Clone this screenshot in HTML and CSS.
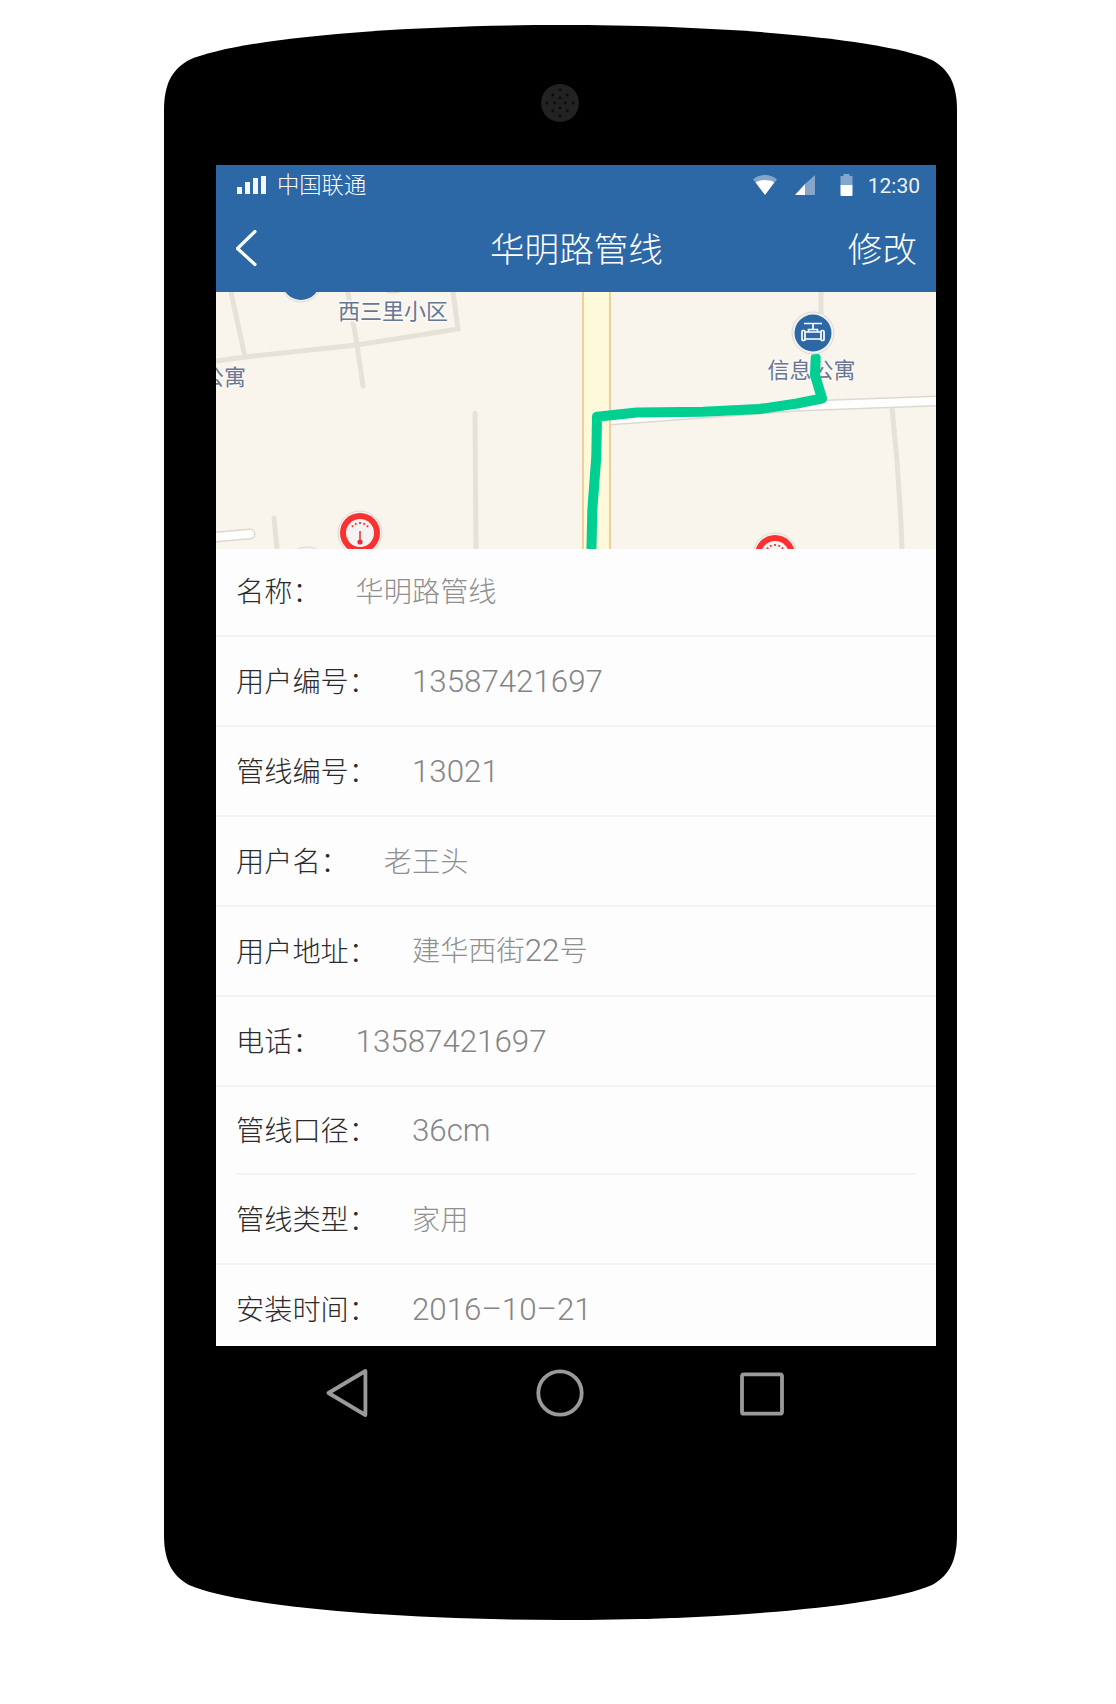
FILE: index.html
```
<!DOCTYPE html>
<html lang="zh-CN">
<head>
<meta charset="utf-8">
<title>华明路管线</title>
<link rel="stylesheet" href="styles.css">
</head>
<body>
<div class="phone">
  <svg class="speaker" viewBox="-20 -20 40 40" aria-hidden="true">
    <circle class="speaker-body" r="19"/>
    <g class="speaker-holes">
      <circle cx="0" cy="-13" r="1.4"/><circle cx="-7.3" cy="-8" r="1.4"/><circle cx="7.3" cy="-8" r="1.4"/>
      <circle cx="-13" cy="0" r="1.4"/><circle cx="-5.3" cy="0" r="1.4"/><circle cx="5.3" cy="0" r="1.4"/><circle cx="13" cy="0" r="1.4"/>
      <circle cx="-7.3" cy="8" r="1.4"/><circle cx="7.3" cy="8" r="1.4"/><circle cx="0" cy="13" r="1.4"/>
      <circle cx="0" cy="-5" r="1.4"/><circle cx="0" cy="5" r="1.4"/>
    </g>
  </svg>

  <main class="screen">
    <div class="status">
      <div class="status-left">
        <div class="signal"><i class="bar bar-1"></i><i class="bar bar-2"></i><i class="bar bar-3"></i><i class="bar bar-4"></i></div>
        <span class="carrier">中国联通</span>
      </div>
      <div class="status-right">
        <svg class="wifi" viewBox="0 0 24 20" aria-hidden="true">
          <path class="dim" d="M0 4.5C3 1.5 7.5 0 12 0s9 1.5 12 4.500L21 8C18.500 6.300 15.500 5.500 12 5.500S5.500 6.300 3 8z"/>
          <path d="M2.600 7.500C5 5.700 8.300 5 12 5s7 .7 9.400 2.500L12 20z"/>
        </svg>
        <svg class="cell" viewBox="0 0 20 20" aria-hidden="true">
          <path class="dim" d="M20 0V20H10V9z"/>
          <path d="M10 9V20H0z"/>
        </svg>
        <svg class="battery" viewBox="0 0 14 22" aria-hidden="true">
          <path class="dim" d="M4 0H10V2H13V11H1V2H4z"/>
          <path d="M1 11H13V21a1 1 0 0 1-1 1H2a1 1 0 0 1-1-1z"/>
        </svg>
        <span class="time">12:30</span>
      </div>
    </div>

    <header class="topbar">
      <div class="topbar-side">
        <svg class="chevron" viewBox="0 0 22 38" aria-hidden="true"><path d="M19 2.500L1.500 19.500L19 35.500"/></svg>
      </div>
      <h1 class="title">华明路管线</h1>
      <div class="topbar-side topbar-action">修改</div>
    </header>

    <div class="map">
      <svg class="map-canvas" viewBox="216 292 720 257" aria-hidden="true">
        <defs>
          <g id="gauge">
            <circle class="pin-ring" r="22"/>
            <circle class="gauge-red" r="20"/>
            <circle class="gauge-face" r="14"/>
            <path class="gauge-ticks" d="M-8-7.500l1 1.600M-4.500-10l.6 1.800M0-11v2M4.500-10l-.6 1.800M8-7.500l-1 1.600"/>
            <path class="gauge-needle" d="M0-2V8"/>
            <circle class="gauge-bulb" cx="0" cy="9" r="2.600"/>
          </g>
        </defs>
        <g class="roads">
          <path d="M231 292L245 357"/>
          <path d="M216 361L245 357L357 345L458 329L453 292"/>
          <path d="M348 292L357 345L363 386"/>
          <path d="M475 413L476 549"/>
          <path d="M274 518L277 549"/>
          <path d="M821 292V320"/>
          <path d="M892 408C896 445 900 490 902 549"/>
        </g>
        <path class="wide-edge" d="M216 537L250 534"/>
        <path class="wide-fill" d="M216 537L250 534"/>
        <path class="wide-edge" d="M610 420L800 406L936 401"/>
        <path class="wide-fill" d="M610 420L800 406L936 401"/>
        <rect class="avenue-edge" x="582" y="292" width="29" height="257"/>
        <rect class="avenue-fill" x="584" y="292" width="25" height="257"/>
        <circle class="pin-ring-faint" cx="393" cy="273" r="20"/>
        <circle class="pin-ring" cx="307" cy="569" r="22"/>

        <text class="map-label" x="338" y="318.500">西三里小区</text>
        <text class="map-label" x="202" y="384.500">公寓</text>
        <text class="map-label" x="767.500" y="377.500">信息公寓</text>

        <path class="route" d="M815.700 358L815 375L822 398.500L797 403.500L760 409L703 411.700L636.700 412.500L597 416.700L596.300 456.700L592.300 510L591.300 556"/>

        <circle class="pin-ring" cx="301" cy="281" r="21"/>
        <circle class="pin-blue" cx="301" cy="281" r="19"/>

        <g transform="translate(813 333)">
          <circle class="pin-ring" r="21"/>
          <circle class="pin-blue" r="18.500"/>
          <path class="valve" d="M-9-9.500H9M0-9.500V-3.500M-4.500-1V-3.500H4.500V-1M-8-1H8M-8 6H8M-11-1.500a1 1 0 0 1 1-1h1a1 1 0 0 1 1 1v8a1 1 0 0 1-1 1h-1a1 1 0 0 1-1-1zM8-1.500a1 1 0 0 1 1-1h1a1 1 0 0 1 1 1v8a1 1 0 0 1-1 1H9a1 1 0 0 1-1-1z"/>
        </g>
        <use href="#gauge" x="360" y="533"/>
        <use href="#gauge" x="775" y="555"/>
      </svg>
    </div>

    <section class="details">
      <div class="row row-first"><span class="label">名称：</span><span class="value">华明路管线</span></div>
      <div class="row"><span class="label">用户编号：</span><span class="value num">13587421697</span></div>
      <div class="row"><span class="label">管线编号：</span><span class="value num">13021</span></div>
      <div class="row"><span class="label">用户名：</span><span class="value">老王头</span></div>
      <div class="row"><span class="label">用户地址：</span><span class="value">建华西街<span class="num">22</span>号</span></div>
      <div class="row"><span class="label">电话：</span><span class="value num">13587421697</span></div>
      <div class="row row-inset"><span class="label">管线口径：</span><span class="value num">36cm</span></div>
      <div class="row"><span class="label">管线类型：</span><span class="value">家用</span></div>
      <div class="row row-last"><span class="label">安装时间：</span><span class="value num">2016–10–21</span></div>
    </section>
  </main>

  <nav class="softkeys" aria-label="系统导航">
    <svg class="key key-back" viewBox="0 0 48 48" aria-hidden="true"><path d="M42.400 2V46L5.500 24z"/></svg>
    <svg class="key key-home" viewBox="0 0 48 48" aria-hidden="true"><circle cx="24" cy="24" r="21.700"/></svg>
    <svg class="key key-recents" viewBox="0 0 48 48" aria-hidden="true"><rect x="4" y="5.300" width="40" height="39.400" rx="2"/></svg>
  </nav>
</div>
</body>
</html>
```

FILE: styles.css
```
* { box-sizing: border-box; }
html, body { margin: 0; padding: 0; background: #fff; }
body {
  height: 1704px;
  overflow: hidden;
  font-family: "Noto Sans CJK SC", "Liberation Sans", sans-serif;
}

.phone {
  width: 793px;
  height: 1595px;
  margin: 25px 0 0 164px;
  padding: 58px 21px 0 52px;
  background: #000;
  clip-path: path("M0 85C0 55 11 43 25 35C76 13 236 0 396.500 0C557 0 717 13 768 35C782 43 793 55 793 85V1510C793 1540 782 1552 768 1560C717 1582 557 1595 396.500 1595C236 1595 76 1582 25 1560C11 1552 0 1540 0 1510Z");
}

.speaker { display: block; width: 40px; height: 40px; margin: 0 0 42px 324px; }
.speaker-body { fill: #222; }
.speaker-holes { fill: #0c0c0c; }

.screen { display: flex; flex-direction: column; width: 720px; height: 1181px; overflow: hidden; background: #fdfdfe; }

.status {
  display: flex;
  align-items: center;
  justify-content: space-between;
  flex: none;
  height: 40px;
  padding: 0 16px 0 21px;
  color: #fff;
  background: #2c67a6;
}
.status-left, .status-right { display: flex; align-items: center; }
.signal { display: flex; align-items: flex-end; gap: 3px; height: 18px; }
.bar { display: block; width: 5px; background: #f4f6f9; }
.bar-1 { height: 7px; }
.bar-2 { height: 12px; }
.bar-3 { height: 16px; }
.bar-4 { height: 18px; }
.carrier { margin-left: 11px; padding-bottom: 4px; font-size: 22.300px; line-height: 30px; font-weight: 300; }
.status-right svg { display: block; fill: #fff; }
.status-right .dim { fill: rgba(255, 255, 255, .42); }
.wifi { width: 24px; height: 20px; }
.cell { width: 20px; height: 20px; margin-left: 18px; }
.battery { width: 15px; height: 22px; margin-left: 24px; }
.time { margin-left: 14px; padding-top: 1px; font: 400 21px/28px Roboto, sans-serif; color: #eef2f7; }

.topbar {
  display: flex;
  align-items: center;
  justify-content: space-between;
  flex: none;
  height: 87px;
  padding: 0 19px 3px 20px;
  color: #fff;
  background: #2c67a6;
}
.topbar-side { width: 70px; font-size: 34.600px; line-height: 44px; font-weight: 300; }
.topbar-action { text-align: right; }
.chevron { display: block; width: 22px; height: 38px; margin-top: 2px; fill: none; stroke: #fff; stroke-width: 3.200; stroke-linecap: round; stroke-linejoin: round; }
.title { margin: 0; font-size: 34.600px; line-height: 44px; font-weight: 300; }

.map { flex: none; height: 257px; background: #f9f5ec; }
.map-canvas { display: block; width: 720px; height: 257px; }
.roads path { fill: none; stroke: #e6e2d7; stroke-width: 5; stroke-linecap: round; }
.wide-edge { fill: none; stroke: #ded9cd; stroke-width: 11; stroke-linecap: round; }
.wide-fill { fill: none; stroke: #fff; stroke-width: 8; stroke-linecap: round; }
.avenue-edge { fill: #edd09c; }
.avenue-fill { fill: #fff9dc; }
.map-label {
  font-size: 22px;
  fill: #6a7793;
  stroke: #fbf9f5;
  stroke-width: 3px;
  paint-order: stroke;
}
.route { fill: none; stroke: #00cf92; stroke-width: 10; stroke-linecap: round; stroke-linejoin: round; }
.pin-ring { fill: #f4f2ee; stroke: #dcd9d3; stroke-width: 1; }
.pin-ring-faint { fill: #f9f6ef; stroke: #d8d5cf; stroke-width: 1; }
.pin-blue { fill: #2c67a6; }
.valve { fill: none; stroke: #fff; stroke-width: 1.700; }
.gauge-red { fill: #fb3030; }
.gauge-face { fill: #f5f3f1; }
.gauge-ticks { fill: none; stroke: #fb3030; stroke-width: 1.800; }
.gauge-needle { fill: none; stroke: #e93030; stroke-width: 1.500; }
.gauge-bulb { fill: #e93030; }

.details { flex: 1; min-height: 0; }
.row {
  display: flex;
  align-items: center;
  height: 90px;
  padding: 0 20px 2px;
  border-bottom: 2px solid #f4f4f4;
}
.row-first { height: 88px; padding-bottom: 4px; }
.row-inset { height: 88px; margin: 0 20px; padding: 0 0 2px; }
.row-last { border-bottom: 0; height: 88px; }
.label { font-size: 28.200px; line-height: 40px; font-weight: 300; color: #2b2b2b; }
.value { margin-left: 35px; font-size: 28.200px; line-height: 40px; font-weight: 300; color: #8f8f8f; }
.value.num { padding-top: 4px; }
.num { font-family: Roboto, "Liberation Sans", sans-serif; font-size: 31.300px; font-weight: 300; color: #858585; }

.softkeys { display: flex; margin-top: 23px; }
.key { display: block; flex: none; width: 48px; height: 48px; fill: none; stroke: #9a9a9a; stroke-width: 3.800; stroke-linejoin: round; }
.key-back { margin-left: 107px; }
.key-home { margin-left: 165px; }
.key-recents { margin-left: 154px; }
```
